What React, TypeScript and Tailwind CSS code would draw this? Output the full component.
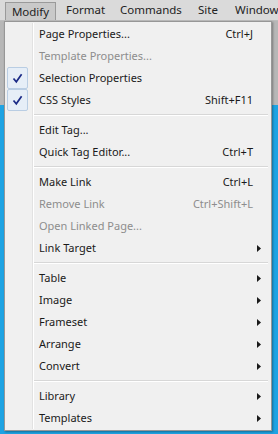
import React from "react";

type Item =
  | { type: "sep" }
  | { type: "item"; label: string; shortcut?: string; disabled?: boolean; checked?: boolean; sub?: boolean };

const items: Item[] = [
  { type: "item", label: "Page Properties...", shortcut: "Ctrl+J" },
  { type: "item", label: "Template Properties...", disabled: true },
  { type: "item", label: "Selection Properties", checked: true },
  { type: "item", label: "CSS Styles", shortcut: "Shift+F11", checked: true },
  { type: "sep" },
  { type: "item", label: "Edit Tag..." },
  { type: "item", label: "Quick Tag Editor...", shortcut: "Ctrl+T" },
  { type: "sep" },
  { type: "item", label: "Make Link", shortcut: "Ctrl+L" },
  { type: "item", label: "Remove Link", shortcut: "Ctrl+Shift+L", disabled: true },
  { type: "item", label: "Open Linked Page...", disabled: true },
  { type: "item", label: "Link Target", sub: true },
  { type: "sep" },
  { type: "item", label: "Table", sub: true },
  { type: "item", label: "Image", sub: true },
  { type: "item", label: "Frameset", sub: true },
  { type: "item", label: "Arrange", sub: true },
  { type: "item", label: "Convert", sub: true },
  { type: "sep" },
  { type: "item", label: "Library", sub: true },
  { type: "item", label: "Templates", sub: true },
];

function Check() {
  return (
    <div className="ml-[2px] w-[21px] h-[22px] border border-[#b9cde3] bg-[#e6eef7] rounded-[2px] flex items-center justify-center">
      <svg width="11" height="11" viewBox="0 0 11 11">
        <path d="M1.5 5.5 L4.3 8.8 L9.6 1.2" fill="none" stroke="#1b2a86" strokeWidth="1.7" />
      </svg>
    </div>
  );
}

function Arrow() {
  return (
    <svg width="4" height="7" viewBox="0 0 4 7">
      <path d="M0 0 L4 3.5 L0 7 Z" fill="#1a1a1a" />
    </svg>
  );
}

export default function App() {
  return (
    <div
      className="relative w-[278px] h-[434px] overflow-hidden bg-[#1ea3e3] text-[11px]"
      style={{ fontFamily: '"Noto Sans", "Open Sans", sans-serif' }}
    >
      {/* menubar */}
      <div className="h-[21px] bg-[#dadada] border-b border-[#bdbdbd] flex items-stretch text-[#222] text-[11.5px] whitespace-nowrap">
        <div className="ml-[5px] mt-[2px] w-[51px] shrink-0 border border-b-0 border-[#9a9a9a] bg-[#c9c9c9] flex items-center justify-center">
          Modify
        </div>
        <div className="w-[64px] shrink-0 pl-[10px] flex items-center">Format</div>
        <div className="w-[78px] shrink-0 flex items-center">Commands</div>
        <div className="w-[37px] shrink-0 flex items-center">Site</div>
        <div className="shrink-0 flex items-center">Window</div>
      </div>
      {/* background content */}
      <div className="h-[84px] bg-[#b7b7b7]" />

      {/* dropdown */}
      <div className="absolute left-[4px] top-[21px] w-[268px] bg-[#f0f0f0] border border-[#979797] py-[1px] shadow-[1px_1px_2px_rgba(0,0,0,0.35)]">
        {items.map((it, i) =>
          it.type === "sep" ? (
            <div key={i} className="flex h-[8px]">
              <div className="w-[28px] border-r border-[#e2e2e2]" />
              <div className="w-[1px] bg-white" />
              <div className="flex-1 flex flex-col justify-center pr-[3px]">
                <div className="h-[1px] bg-[#d7d7d7]" />
                <div className="h-[1px] bg-white" />
              </div>
            </div>
          ) : (
            <div key={i} className="flex h-[22px] items-center">
              <div className="w-[28px] h-full border-r border-[#e2e2e2] flex items-center">
                {it.checked ? <Check /> : null}
              </div>
              <div className="w-[1px] h-full bg-white" />
              <div
                className={`flex-1 flex items-center pl-[5px] whitespace-nowrap ${
                  it.disabled ? "text-[#8d8d8d]" : "text-[#1a1a1a]"
                }`}
              >
                <span className="flex-1">{it.label}</span>
                {it.shortcut ? <span className="pr-[18px]">{it.shortcut}</span> : null}
                {it.sub ? (
                  <span className="pr-[10px] flex items-center">
                    <Arrow />
                  </span>
                ) : null}
              </div>
            </div>
          )
        )}
      </div>
    </div>
  );
}
